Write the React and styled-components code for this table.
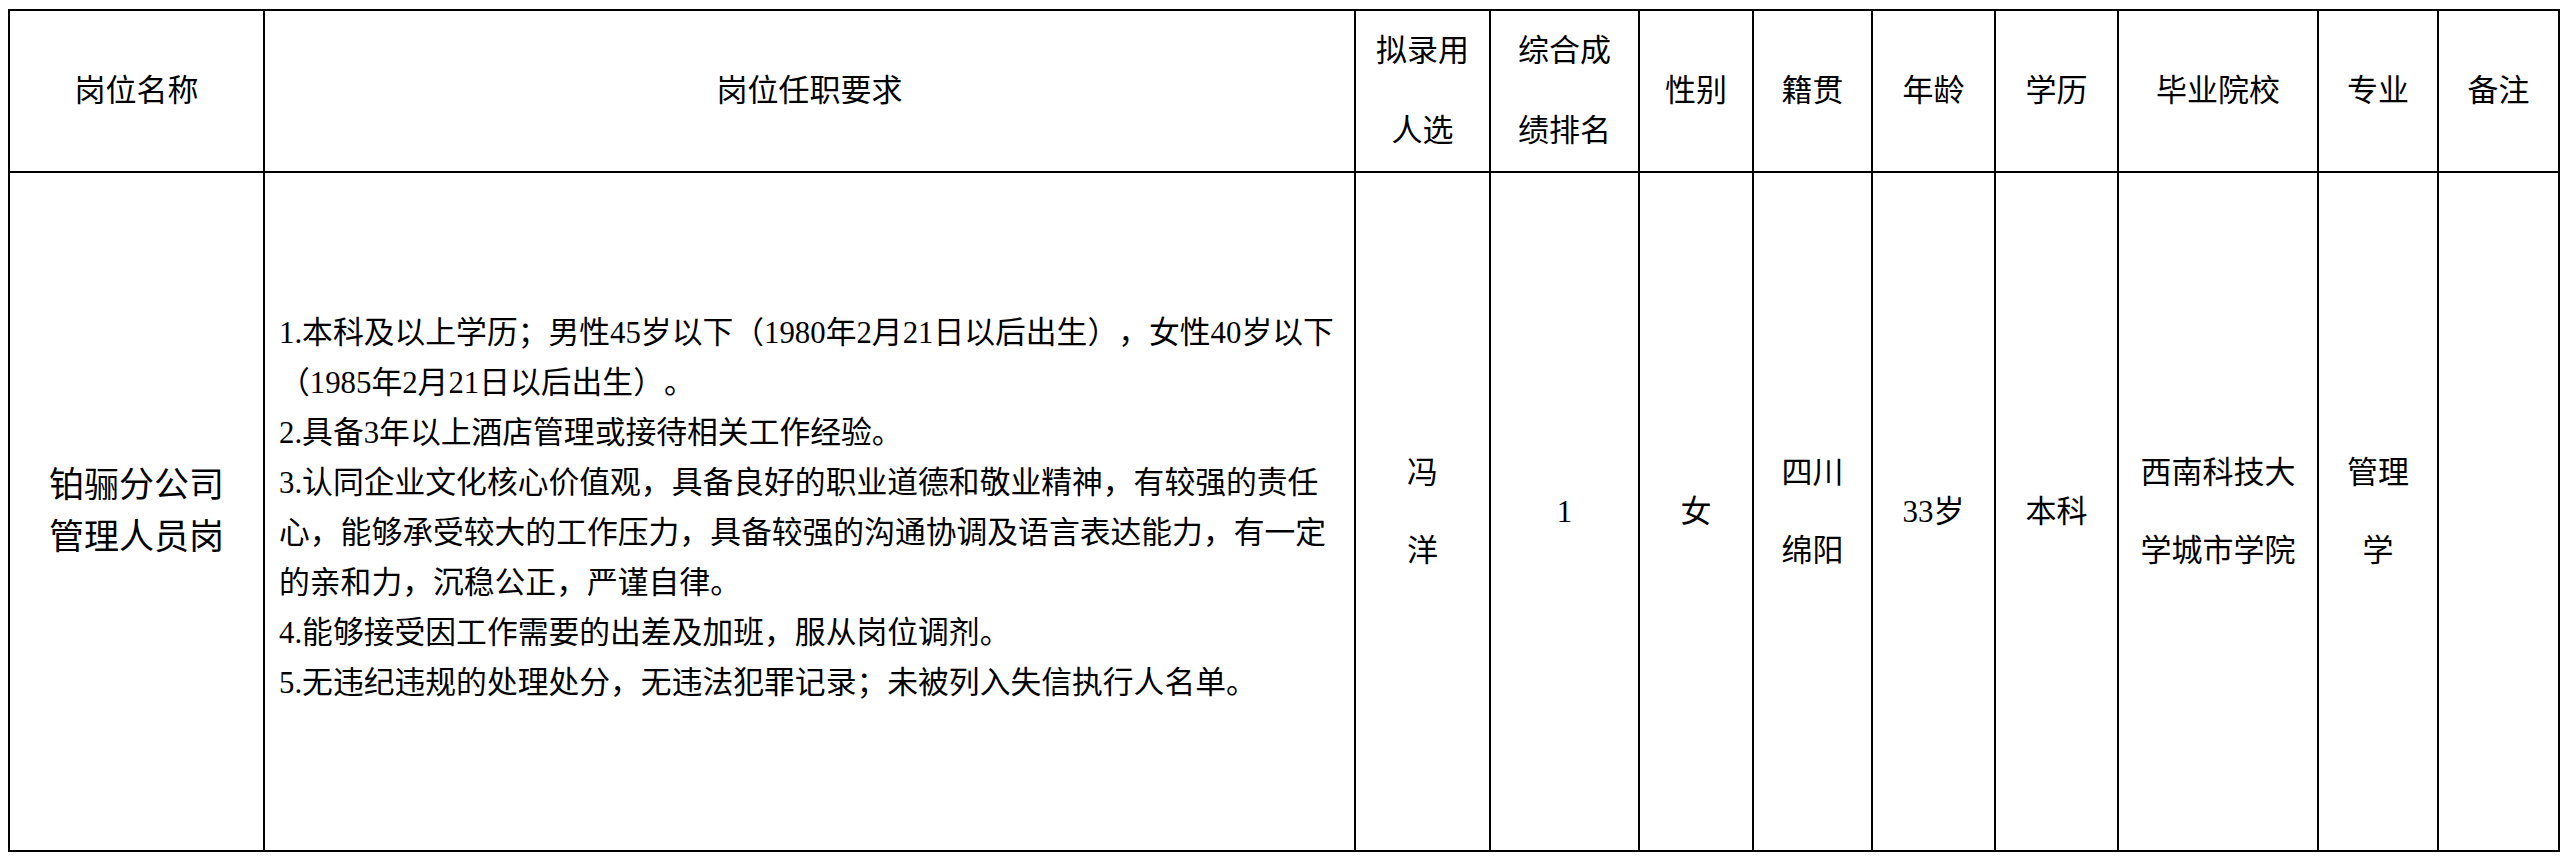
import React from "react";
import styled, { createGlobalStyle } from "styled-components";

const GlobalStyle = createGlobalStyle`
  body {
    margin: 8px;
    background: #fff;
    color: #000;
    font-family: "Liberation Serif", "Noto Sans CJK SC", serif;
    text-spacing-trim: space-all;
  }
`;

const columns = [255, 1091, 135, 149, 114, 119, 123, 123, 200, 120, 121];

const headers = [
  ["岗位名称"],
  ["岗位任职要求"],
  ["拟录用", "人选"],
  ["综合成", "绩排名"],
  ["性别"],
  ["籍贯"],
  ["年龄"],
  ["学历"],
  ["毕业院校"],
  ["专业"],
  ["备注"],
];

const requirements = [
  "1.本科及以上学历；男性45岁以下（1980年2月21日以后出生），女性40岁以下",
  "（1985年2月21日以后出生）。",
  "2.具备3年以上酒店管理或接待相关工作经验。",
  "3.认同企业文化核心价值观，具备良好的职业道德和敬业精神，有较强的责任",
  "心，能够承受较大的工作压力，具备较强的沟通协调及语言表达能力，有一定",
  "的亲和力，沉稳公正，严谨自律。",
  "4.能够接受因工作需要的出差及加班，服从岗位调剂。",
  "5.无违纪违规的处理处分，无违法犯罪记录；未被列入失信执行人名单。",
];

const details = [
  ["冯", "洋"],
  ["1"],
  ["女"],
  ["四川", "绵阳"],
  ["33岁"],
  ["本科"],
  ["西南科技大", "学城市学院"],
  ["管理", "学"],
  [],
];

export default function App() {
  return (
    <>
      <GlobalStyle />
      <Sheet>
        <colgroup>
          {columns.map((w, i) => (
            <Col key={i} $w={w} />
          ))}
        </colgroup>
        <thead>
          <HeadRow>
            {headers.map((lines, i) => (
              <HeadCell key={i}>
                <Stack lines={lines} />
              </HeadCell>
            ))}
          </HeadRow>
        </thead>
        <tbody>
          <BodyRow>
            <Cell $size={35} $lh={52}>
              <Stack lines={["铂骊分公司", "管理人员岗"]} />
            </Cell>
            <TextCell>
              {requirements.map((t, i) => (
                <Line key={i}>{t}</Line>
              ))}
            </TextCell>
            {details.map((lines, i) => (
              <Cell key={i}>
                <Stack lines={lines} />
              </Cell>
            ))}
          </BodyRow>
        </tbody>
      </Sheet>
    </>
  );
}

function Stack({ lines }) {
  return lines.map((l, i) => <Line key={i}>{l}</Line>);
}

// --- STYLES ---

const Sheet = styled.table`
  width: 2552px;
  table-layout: fixed;
  border-collapse: collapse;
  margin-top: 1px;
`;

const Col = styled.col`
  width: ${(p) => p.$w}px;
`;

const HeadRow = styled.tr`
  height: 158px;
`;

const BodyRow = styled.tr`
  height: 679px;
`;

const HeadCell = styled.th`
  border: 2px solid #000;
  padding: 0;
  font-weight: normal;
  font-size: 31px;
  line-height: 80px;
  text-align: center;
  vertical-align: middle;
`;

const Cell = styled.td`
  border: 2px solid #000;
  padding: 0;
  font-size: ${(p) => p.$size || 31}px;
  line-height: ${(p) => p.$lh || 78}px;
  text-align: center;
  vertical-align: middle;
`;

const TextCell = styled.td`
  border: 2px solid #000;
  padding: 0 12px 8px 14px;
  font-size: 30.8px;
  line-height: 50px;
  text-align: left;
  vertical-align: middle;
`;

const Line = styled.div`
  white-space: nowrap;
`;
